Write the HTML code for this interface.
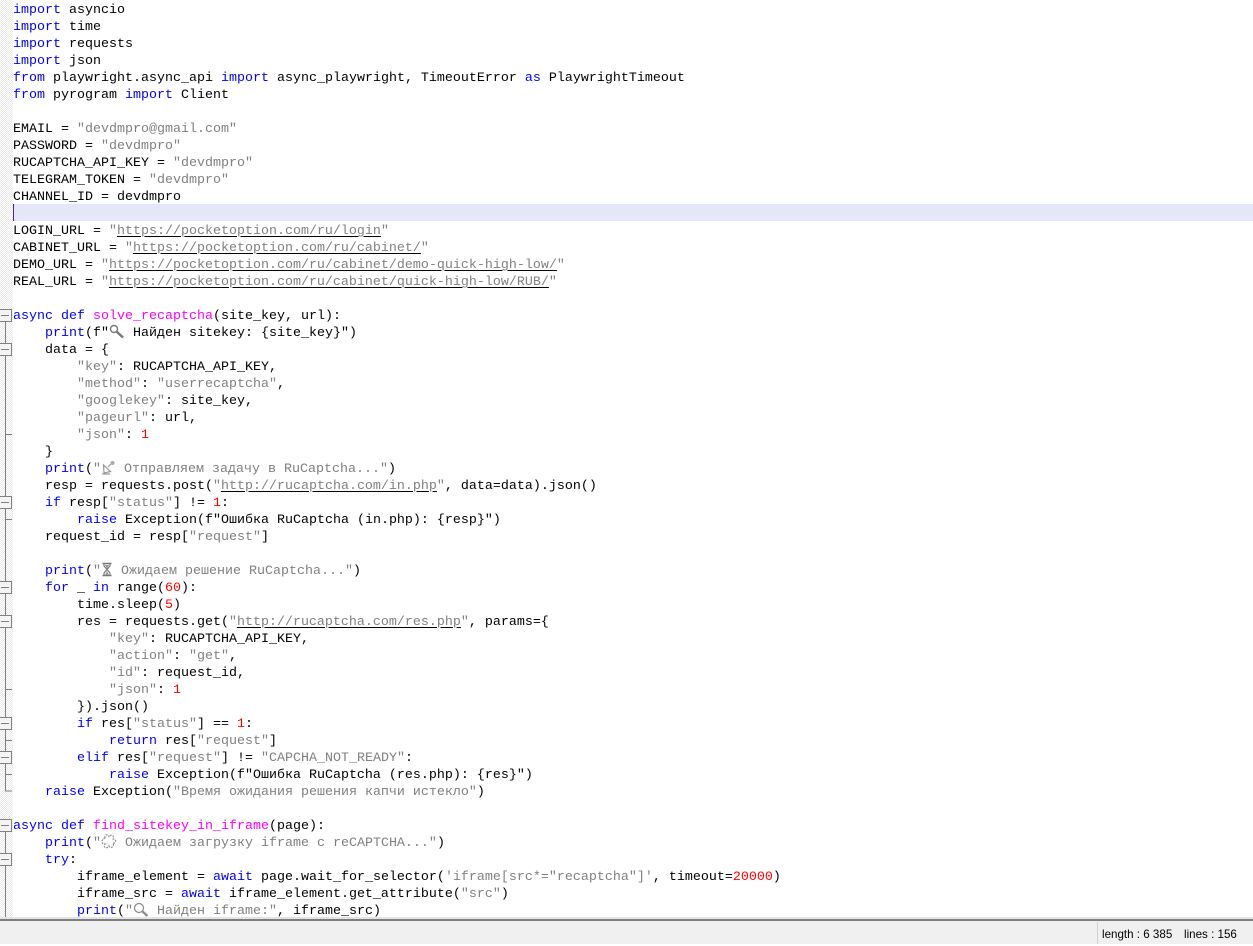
<!DOCTYPE html>
<html><head><meta charset="utf-8"><style>
html,body{margin:0;padding:0;background:#fff;width:1253px;height:944px;overflow:hidden}
#gut{position:absolute;left:0;top:0;width:13px;height:917px;background:repeating-conic-gradient(#e9e9e9 0 25%,#fff 0 50%) 0 0/2px 2px}
#hl{position:absolute;left:13px;top:204px;width:1240px;height:17px;background:#e6e6fa}
#caret{position:absolute;left:13px;top:204px;width:1px;height:17px;background:#5a1a9a}
#code{position:absolute;left:13px;top:0;width:1240px;height:915px;padding-top:2px;overflow:hidden;margin:0;font:13.33px/17px "Liberation Mono","DejaVu Sans Mono",monospace;color:#000;white-space:pre}
i{font-style:normal;color:#0000ff}
s{text-decoration:none;color:#808080}
u{color:#808080;text-decoration:underline;text-decoration-color:#000;text-underline-offset:2px;text-decoration-thickness:1px}
b{font-weight:normal;color:#ff0000}
em{font-style:normal;color:#ff00ff}
svg.e{display:inline-block;vertical-align:3px;height:15px;margin:-6px 0}
#fold{position:absolute;left:0;top:0}
#line{position:absolute;left:0;top:917px;width:1253px;height:2px;background:#e4e4e4}
#line2{position:absolute;left:0;top:919px;width:1253px;height:2px;background:#7e7e7e}
#bar{position:absolute;left:0;top:921px;width:1253px;height:23px;background:#f0f0f0;font:11.6px/23px "Liberation Sans",sans-serif;color:#000}
#sep{position:absolute;left:1097px;top:1px;width:1px;height:22px;background:#d2d2d2}
#t1{position:absolute;left:1102px;top:2px;white-space:pre}
#t2{position:absolute;left:1184px;top:2px;white-space:pre}
</style></head><body>
<div id="gut"></div>
<svg id="fold" width="13" height="917" fill="#f4f4f4" stroke="#808080" stroke-width="1" shape-rendering="crispEdges">
<path d="M5.5 321V791H12M5.5 831V917M5.5 434.5H12M5.5 519.5H12M5.5 689.5H12M5.5 740.5H12M5.5 774.5H12" fill="none"/>
<g>
<rect x="-1" y="309.5" width="12.5" height="12"/><path d="M1 315.5H9"/>
<rect x="-1" y="343.5" width="12.5" height="12"/><path d="M1 349.5H9"/>
<rect x="-1" y="496.5" width="12.5" height="12"/><path d="M1 502.5H9"/>
<rect x="-1" y="581.5" width="12.5" height="12"/><path d="M1 587.5H9"/>
<rect x="-1" y="615.5" width="12.5" height="12"/><path d="M1 621.5H9"/>
<rect x="-1" y="717.5" width="12.5" height="12"/><path d="M1 723.5H9"/>
<rect x="-1" y="751.5" width="12.5" height="12"/><path d="M1 757.5H9"/>
<rect x="-1" y="819.5" width="12.5" height="12"/><path d="M1 825.5H9"/>
<rect x="-1" y="853.5" width="12.5" height="12"/><path d="M1 859.5H9"/>
</g></svg>
<div id="hl"></div><div id="caret"></div>
<pre id="code"><i>import</i> asyncio
<i>import</i> time
<i>import</i> requests
<i>import</i> json
<i>from</i> playwright.async_api <i>import</i> async_playwright, TimeoutError <i>as</i> PlaywrightTimeout
<i>from</i> pyrogram <i>import</i> Client

EMAIL = <s>"devdmpro@gmail.com"</s>
PASSWORD = <s>"devdmpro"</s>
RUCAPTCHA_API_KEY = <s>"devdmpro"</s>
TELEGRAM_TOKEN = <s>"devdmpro"</s>
CHANNEL_ID = devdmpro

LOGIN_URL = <s>"</s><u>https://pocketoption.com/ru/login</u><s>"</s>
CABINET_URL = <s>"</s><u>https://pocketoption.com/ru/cabinet/</u><s>"</s>
DEMO_URL = <s>"</s><u>https://pocketoption.com/ru/cabinet/demo-quick-high-low/</u><s>"</s>
REAL_URL = <s>"</s><u>https://pocketoption.com/ru/cabinet/quick-high-low/RUB/</u><s>"</s>

<i>async</i> <i>def</i> <em>solve_recaptcha</em>(site_key, url):
    <i>print</i>(f"<svg class="e" width="16" viewBox="0 0 16 15" fill="none" stroke="#777"><circle cx="5" cy="5" r="3.5" stroke-width="1.4"/><path d="M7.5 7.5L14 13.5" stroke-width="2.4"/></svg> Найден sitekey: {site_key}")
    data = {
        <s>"key"</s>: RUCAPTCHA_API_KEY,
        <s>"method"</s>: <s>"userrecaptcha"</s>,
        <s>"googlekey"</s>: site_key,
        <s>"pageurl"</s>: url,
        <s>"json"</s>: <b>1</b>
    }
    <i>print</i>(<s>"<svg class="e" width="15" viewBox="0 0 15 15" fill="none" stroke="#999"><path d="M2.5 5L9.5 11.5 3 13Z M1 14H9 M7 7L10 4" stroke-width="1.2"/><circle cx="11.5" cy="3" r="2" fill="#aaa" stroke="none"/></svg> Отправляем задачу в RuCaptcha..."</s>)
    resp = requests.post(<s>"</s><u>http://rucaptcha.com/in.php</u><s>"</s>, data=data).json()
    <i>if</i> resp[<s>"status"</s>] != <b>1</b>:
        <i>raise</i> Exception(f"Ошибка RuCaptcha (in.php): {resp}")
    request_id = resp[<s>"request"</s>]

    <i>print</i>(<s>"<svg class="e" width="12" viewBox="0 0 12 15" fill="none" stroke="#777"><path d="M1.5 1.5H10.5M1.5 13.5H10.5" stroke-width="1.6"/><path d="M3 2L3 4 9 11V13M9 2V4L3 11V13" stroke-width="1.1"/><path d="M4 3H8L6 7ZM4 13L6 9 8 13Z" fill="#999" stroke="none"/></svg> Ожидаем решение RuCaptcha..."</s>)
    <i>for</i> _ <i>in</i> range(<b>60</b>):
        time.sleep(<b>5</b>)
        res = requests.get(<s>"</s><u>http://rucaptcha.com/res.php</u><s>"</s>, params={
            <s>"key"</s>: RUCAPTCHA_API_KEY,
            <s>"action"</s>: <s>"get"</s>,
            <s>"id"</s>: request_id,
            <s>"json"</s>: <b>1</b>
        }).json()
        <i>if</i> res[<s>"status"</s>] == <b>1</b>:
            <i>return</i> res[<s>"request"</s>]
        <i>elif</i> res[<s>"request"</s>] != <s>"CAPCHA_NOT_READY"</s>:
            <i>raise</i> Exception(f"Ошибка RuCaptcha (res.php): {res}")
    <i>raise</i> Exception(<s>"Время ожидания решения капчи истекло"</s>)

<i>async</i> <i>def</i> <em>find_sitekey_in_iframe</em>(page):
    <i>print</i>(<s>"<svg class="e" width="16" viewBox="0 0 16 15" fill="none" stroke="#888" stroke-width="1.1" stroke-dasharray="2 1"><path d="M4 4C3 0 8 0 8 3C9 0 14 1 12 5C16 5 15 10 12 9C14 13 9 15 8 12C7 15 1 14 4 10C0 11 0 5 4 4Z"/></svg> Ожидаем загрузку iframe с reCAPTCHA..."</s>)
    <i>try</i>:
        iframe_element = <i>await</i> page.wait_for_selector(<s>'iframe[src*="recaptcha"]'</s>, timeout=<b>20000</b>)
        iframe_src = <i>await</i> iframe_element.get_attribute(<s>"src"</s>)
        <i>print</i>(<s>"<svg class="e" width="16" viewBox="0 0 16 15" fill="none" stroke="#888"><circle cx="6" cy="6" r="4.5" stroke-width="1.2"/><path d="M9.5 9.5L14.5 14" stroke-width="2.2"/></svg> Найден iframe:"</s>, iframe_src)</pre>
<div id="line"></div><div id="line2"></div>
<div id="bar"><div id="sep"></div><div id="t1">length : 6 385</div><div id="t2">lines : 156</div></div>
</body></html>
